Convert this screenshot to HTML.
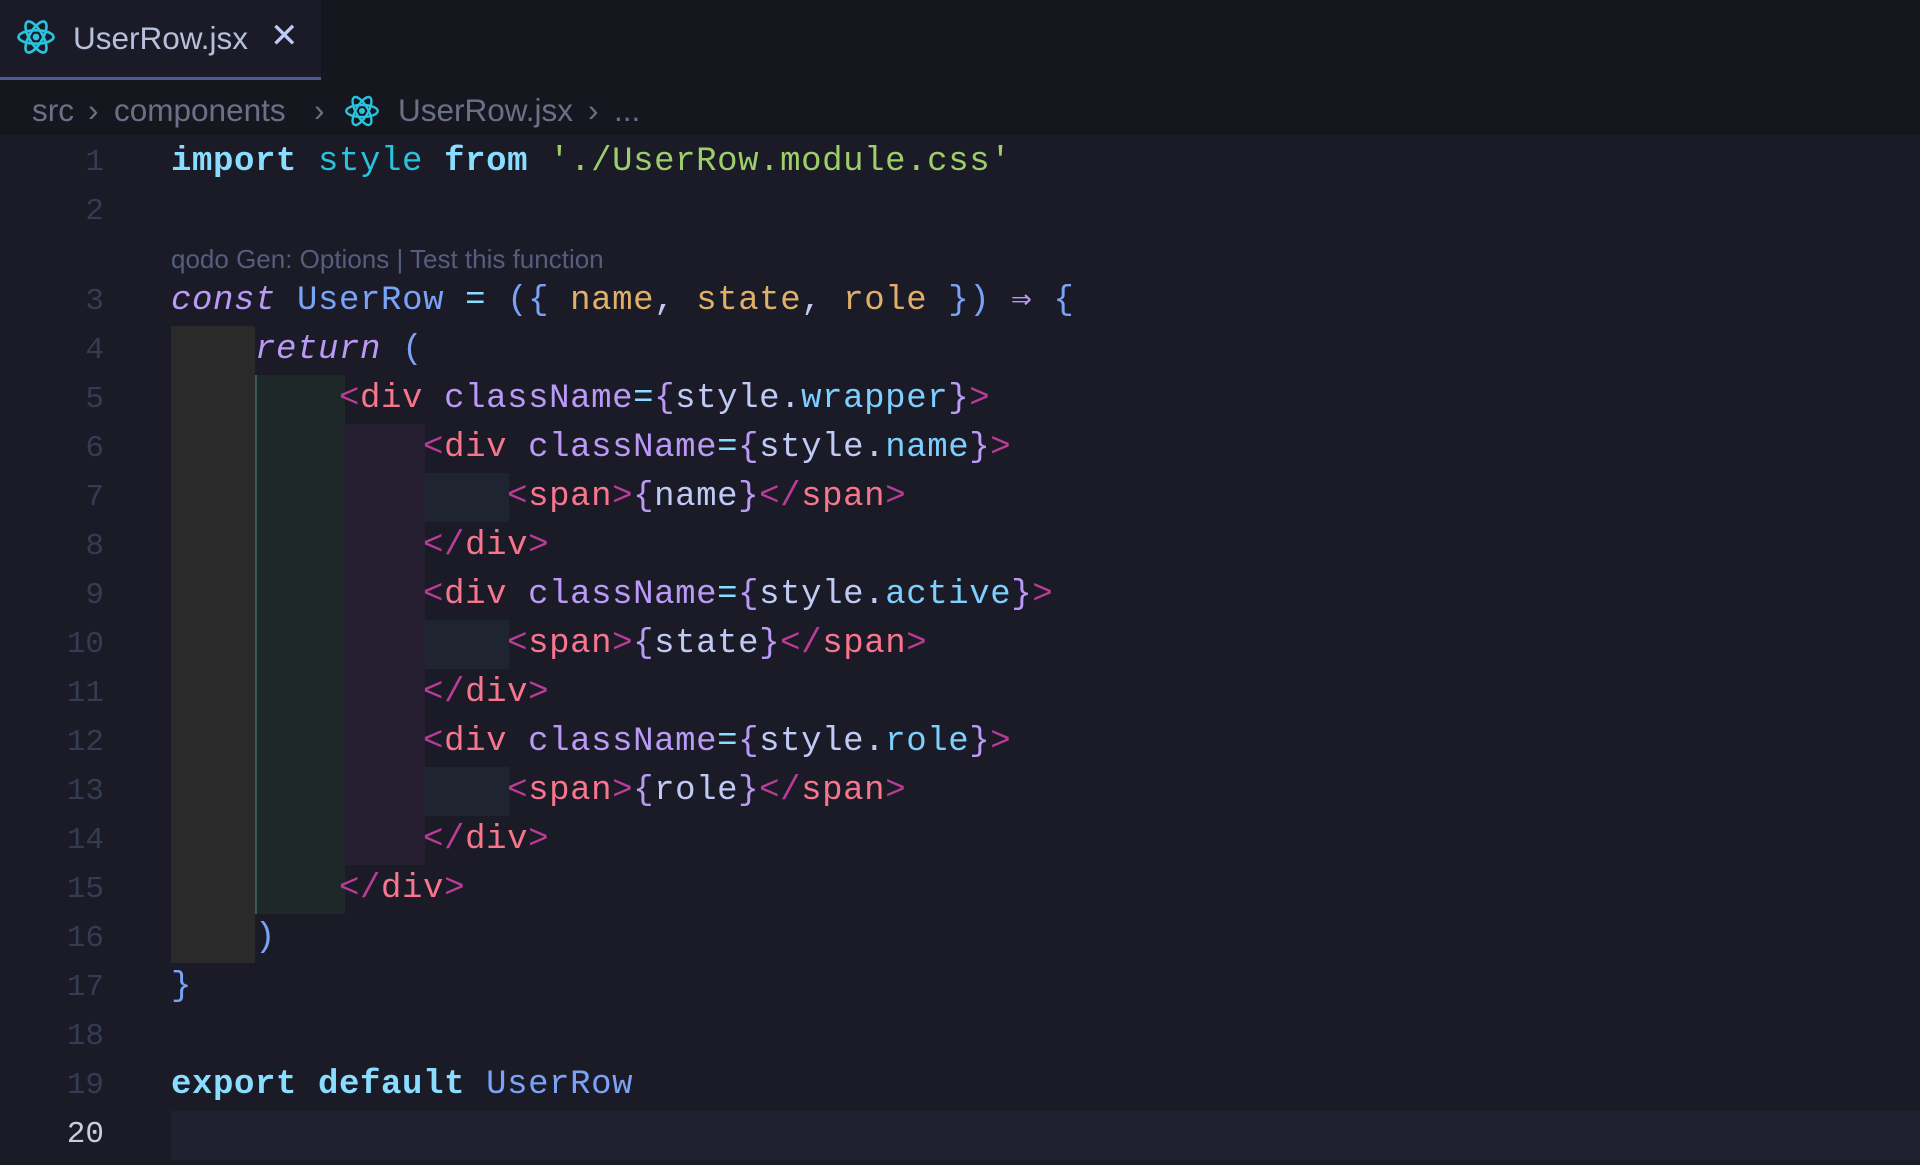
<!DOCTYPE html>
<html><head><meta charset="utf-8"><style>
html,body{margin:0;padding:0;}
body{width:1920px;height:1165px;background:#1a1b26;overflow:hidden;position:relative;font-family:"Liberation Sans",sans-serif;}
.tabbar{position:absolute;left:0;top:0;width:1920px;height:80px;background:#16161e;}
.tab{position:absolute;left:0;top:0;width:321px;height:77px;background:#1a1b26;border-bottom:3px solid #4d5b92;}
.tab .lbl{position:absolute;left:73px;top:20px;font-size:31.5px;color:#b8bfdc;}
.tab .x{position:absolute;left:270px;top:16px;font-size:34px;color:#c0caf5;}
.bc{position:absolute;left:0;top:80px;width:1920px;height:55px;background:#16161e;font-size:31.5px;color:#6b7089;}
.bc span{position:absolute;top:12px;}
.ln{position:absolute;left:0;width:104px;text-align:right;font-family:"Liberation Mono",monospace;font-size:31px;color:#363b54;height:49px;line-height:49px;}
.code{position:absolute;left:171px;height:49px;line-height:49px;font-family:"Liberation Mono",monospace;font-size:34px;letter-spacing:0.6px;white-space:pre;color:#c0caf5;}
.g{position:absolute;}
.kw{color:#89ddff;font-weight:bold}
.st{color:#2ac3de}
.s{color:#9ece6a}
.it{color:#bb9af7;font-style:italic}
.fn{color:#7aa2f7}
.op{color:#89ddff}
.p{color:#e0af68}
.br{color:#7aa2f7}
.pu{color:#bb9af7}
.tg{color:#f7768e}
.tp{color:#ba3c97}
.at{color:#bb9af7}
.pr{color:#7dcfff}
.lens{position:absolute;left:171px;top:244px;font-size:26px;color:#565d7e;}
</style></head><body>
<div class="tabbar"></div>
<div class="tab">
<svg style="position:absolute;left:16px;top:17px" width="40" height="40" viewBox="-12 -12 24 24"><g fill="none" stroke="#2ac3de" stroke-width="1.6"><ellipse rx="10.5" ry="4"/><ellipse rx="10.5" ry="4" transform="rotate(60)"/><ellipse rx="10.5" ry="4" transform="rotate(120)"/></g><circle r="2" fill="#2ac3de"/></svg>
<span class="lbl">UserRow.jsx</span><span class="x">✕</span></div>
<div class="bc"><span style="left:32px">src</span><span style="left:88px">›</span><span style="left:114px">components</span><span style="left:314px">›</span>
<svg style="position:absolute;left:344px;top:13px" width="36" height="36" viewBox="-12 -12 24 24"><g fill="none" stroke="#2ac3de" stroke-width="1.6"><ellipse rx="10.5" ry="4"/><ellipse rx="10.5" ry="4" transform="rotate(60)"/><ellipse rx="10.5" ry="4" transform="rotate(120)"/></g><circle r="2" fill="#2ac3de"/></svg>
<span style="left:398px">UserRow.jsx</span><span style="left:588px">›</span><span style="left:614px">...</span></div>

<div class="g" style="left:171px;top:326px;width:84px;height:637px;background:#2a2a2b"></div>
<div class="g" style="left:255px;top:375px;width:88px;height:539px;background:#1f2829;border-left:2px solid #3a5a5a"></div>
<div class="g" style="left:343px;top:424px;width:82px;height:441px;background:#261f31"></div>
<div class="g" style="left:425px;top:473px;width:84px;height:49px;background:#1e2530"></div>
<div class="g" style="left:425px;top:620px;width:84px;height:49px;background:#1e2530"></div>
<div class="g" style="left:425px;top:767px;width:84px;height:49px;background:#1e2530"></div>
<div class="g" style="left:171px;top:1111px;width:1749px;height:49px;background:#1f2030"></div>

<div class="ln" style="top:138px">1</div>
<div class="ln" style="top:187px">2</div>
<div class="ln" style="top:277px">3</div>
<div class="ln" style="top:326px">4</div>
<div class="ln" style="top:375px">5</div>
<div class="ln" style="top:424px">6</div>
<div class="ln" style="top:473px">7</div>
<div class="ln" style="top:522px">8</div>
<div class="ln" style="top:571px">9</div>
<div class="ln" style="top:620px">10</div>
<div class="ln" style="top:669px">11</div>
<div class="ln" style="top:718px">12</div>
<div class="ln" style="top:767px">13</div>
<div class="ln" style="top:816px">14</div>
<div class="ln" style="top:865px">15</div>
<div class="ln" style="top:914px">16</div>
<div class="ln" style="top:963px">17</div>
<div class="ln" style="top:1012px">18</div>
<div class="ln" style="top:1061px">19</div>
<div class="ln" style="top:1110px;color:#c8cde0">20</div>

<div class="code" style="top:138px"><span class="kw">import</span> <span class="st">style</span> <span class="kw">from</span> <span class="s">'./UserRow.module.css'</span></div>
<div class="lens">qodo Gen: Options | Test this function</div>
<div class="code" style="top:277px"><span class="it">const</span> <span class="fn">UserRow</span> <span class="op">=</span> <span class="br">({</span> <span class="p">name</span>, <span class="p">state</span>, <span class="p">role</span> <span class="br">})</span> <span class="pu">⇒</span> <span class="br">{</span></div>
<div class="code" style="top:326px">    <span class="it">return</span> <span class="br">(</span></div>
<div class="code" style="top:375px">        <span class="tp">&lt;</span><span class="tg">div</span> <span class="at">className</span><span class="op">=</span><span class="pu">{</span>style.<span class="pr">wrapper</span><span class="pu">}</span><span class="tp">&gt;</span></div>
<div class="code" style="top:424px">            <span class="tp">&lt;</span><span class="tg">div</span> <span class="at">className</span><span class="op">=</span><span class="pu">{</span>style.<span class="pr">name</span><span class="pu">}</span><span class="tp">&gt;</span></div>
<div class="code" style="top:473px">                <span class="tp">&lt;</span><span class="tg">span</span><span class="tp">&gt;</span><span class="pu">{</span>name<span class="pu">}</span><span class="tp">&lt;/</span><span class="tg">span</span><span class="tp">&gt;</span></div>
<div class="code" style="top:522px">            <span class="tp">&lt;/</span><span class="tg">div</span><span class="tp">&gt;</span></div>
<div class="code" style="top:571px">            <span class="tp">&lt;</span><span class="tg">div</span> <span class="at">className</span><span class="op">=</span><span class="pu">{</span>style.<span class="pr">active</span><span class="pu">}</span><span class="tp">&gt;</span></div>
<div class="code" style="top:620px">                <span class="tp">&lt;</span><span class="tg">span</span><span class="tp">&gt;</span><span class="pu">{</span>state<span class="pu">}</span><span class="tp">&lt;/</span><span class="tg">span</span><span class="tp">&gt;</span></div>
<div class="code" style="top:669px">            <span class="tp">&lt;/</span><span class="tg">div</span><span class="tp">&gt;</span></div>
<div class="code" style="top:718px">            <span class="tp">&lt;</span><span class="tg">div</span> <span class="at">className</span><span class="op">=</span><span class="pu">{</span>style.<span class="pr">role</span><span class="pu">}</span><span class="tp">&gt;</span></div>
<div class="code" style="top:767px">                <span class="tp">&lt;</span><span class="tg">span</span><span class="tp">&gt;</span><span class="pu">{</span>role<span class="pu">}</span><span class="tp">&lt;/</span><span class="tg">span</span><span class="tp">&gt;</span></div>
<div class="code" style="top:816px">            <span class="tp">&lt;/</span><span class="tg">div</span><span class="tp">&gt;</span></div>
<div class="code" style="top:865px">        <span class="tp">&lt;/</span><span class="tg">div</span><span class="tp">&gt;</span></div>
<div class="code" style="top:914px">    <span class="br">)</span></div>
<div class="code" style="top:963px"><span class="br">}</span></div>
<div class="code" style="top:1061px"><span class="kw">export</span> <span class="kw">default</span> <span class="fn">UserRow</span></div>
</body></html>
